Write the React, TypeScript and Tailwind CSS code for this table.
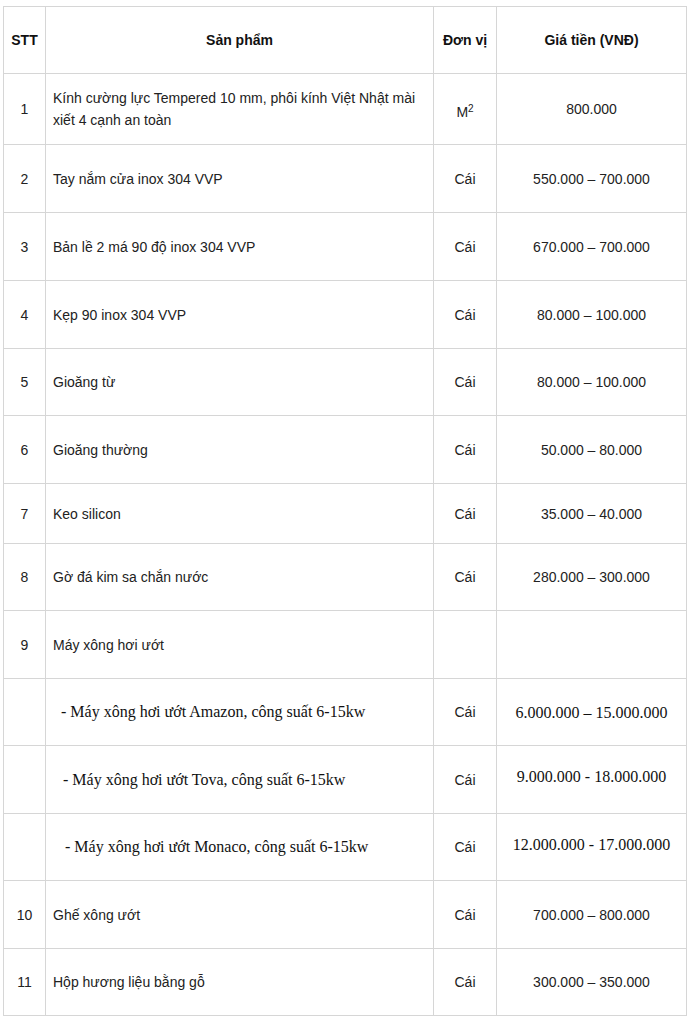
type Row = {
  stt: string;
  name: string;
  unit: string;
  price: string;
  h: string;
  serif?: boolean;
  indent?: string;
  lift?: boolean;
};

const rows: Row[] = [
  { stt: '1', name: 'Kính cường lực Tempered 10 mm, phôi kính Việt Nhật mài xiết 4 cạnh an toàn', unit: 'M2', price: '800.000', h: 'h-[71px]' },
  { stt: '2', name: 'Tay nắm cửa inox 304 VVP', unit: 'Cái', price: '550.000 – 700.000', h: 'h-[68px]' },
  { stt: '3', name: 'Bản lề 2 má 90 độ inox 304 VVP', unit: 'Cái', price: '670.000 – 700.000', h: 'h-[68px]' },
  { stt: '4', name: 'Kẹp 90 inox 304 VVP', unit: 'Cái', price: '80.000 – 100.000', h: 'h-[68px]' },
  { stt: '5', name: 'Gioăng từ', unit: 'Cái', price: '80.000 – 100.000', h: 'h-[67px]' },
  { stt: '6', name: 'Gioăng thường', unit: 'Cái', price: '50.000 – 80.000', h: 'h-[68px]' },
  { stt: '7', name: 'Keo silicon', unit: 'Cái', price: '35.000 – 40.000', h: 'h-[60px]' },
  { stt: '8', name: 'Gờ đá kim sa chắn nước', unit: 'Cái', price: '280.000 – 300.000', h: 'h-[67px]' },
  { stt: '9', name: 'Máy xông hơi ướt', unit: '', price: '', h: 'h-[68px]' },
  { stt: '', name: '- Máy xông hơi ướt Amazon, công suất 6-15kw', unit: 'Cái', price: '6.000.000 – 15.000.000', h: 'h-[67px]', serif: true, indent: 'pl-[15px]' },
  { stt: '', name: '- Máy xông hơi ướt Tova, công suất 6-15kw', unit: 'Cái', price: '9.000.000 - 18.000.000', h: 'h-[68px]', serif: true, indent: 'pl-[17px]', lift: true },
  { stt: '', name: '- Máy xông hơi ướt Monaco, công suất 6-15kw', unit: 'Cái', price: '12.000.000 - 17.000.000', h: 'h-[67px]', serif: true, indent: 'pl-[19px]', lift: true },
  { stt: '10', name: 'Ghế xông ướt', unit: 'Cái', price: '700.000 – 800.000', h: 'h-[68px]' },
  { stt: '11', name: 'Hộp hương liệu bằng gỗ', unit: 'Cái', price: '300.000 – 350.000', h: 'h-[67px]' },
];

const cell = 'border border-[#d6d6d6] align-middle';
const serif = "font-['Liberation_Serif','Times_New_Roman',serif] text-[16px] text-[#111]";

export default function App() {
  return (
    <div className="bg-white min-h-screen pt-[6px] pl-[3px] text-[#222] font-['Liberation_Sans',Arial,sans-serif] text-[14px] leading-[22px]">
      <table className="table-fixed border-collapse w-[683px]">
        <colgroup>
          <col className="w-[42px]" />
          <col className="w-[388px]" />
          <col className="w-[63px]" />
          <col className="w-[190px]" />
        </colgroup>
        <thead>
          <tr className="h-[67px] font-bold text-[#111]">
            <th className={`${cell} text-center`}>STT</th>
            <th className={`${cell} text-center`}>Sản phẩm</th>
            <th className={`${cell} text-center`}>Đơn vị</th>
            <th className={`${cell} text-center`}>Giá tiền (VNĐ)</th>
          </tr>
        </thead>
        <tbody>
          {rows.map((r, i) => (
            <tr key={i} className={r.h}>
              <td className={`${cell} text-center`}>{r.stt}</td>
              <td className={`${cell} ${r.indent ?? 'pl-[7px]'} pr-[6px] ${r.serif ? serif : ''}`}>
                {r.name}
              </td>
              <td className={`${cell} text-center`}>
                {r.unit === 'M2' ? (
                  <span className="inline-block pt-[6px]">
                    M<sup className="text-[10px]">2</sup>
                  </span>
                ) : (
                  r.unit
                )}
              </td>
              <td
                className={`${cell} text-center ${r.serif ? serif : ''} ${r.serif && !r.lift ? 'pt-[2px]' : ''} ${
                  r.lift ? 'pb-[5px]' : ''
                }`}
              >
                {r.price}
              </td>
            </tr>
          ))}
        </tbody>
      </table>
    </div>
  );
}
